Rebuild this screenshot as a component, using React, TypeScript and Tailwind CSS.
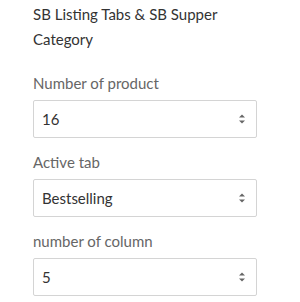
import React from 'react';

const Arrows = () => (
  <svg width="8" height="12" viewBox="0 0 8 12" className="shrink-0">
    <path d="M1 4.5 L4 1.5 L7 4.5 Z" fill="#666" />
    <path d="M1 7.5 L4 10.5 L7 7.5 Z" fill="#666" />
  </svg>
);

const fields = [
  { label: 'Number of product', value: '16' },
  { label: 'Active tab', value: 'Bestselling' },
  { label: 'number of column', value: '5' },
];

export default function App() {
  return (
    <div
      className="w-[300px] h-[302px] bg-white pl-[33px] pt-[2px]"
      style={{ fontFamily: 'Lato, "Open Sans", sans-serif' }}
    >
      <div className="w-[224px]">
        <h3 className="text-[15px] leading-[25px] text-[#333] font-normal">
          SB Listing Tabs &amp; SB Supper Category
        </h3>
        <div className="mt-[19px] flex flex-col gap-[12px]">
          {fields.map((f) => (
            <div key={f.label}>
              <label className="block text-[15px] leading-[24px] text-[#666]">{f.label}</label>
              <div className="mt-[5px] h-[38px] border border-[#d4d4d4] rounded-[2px] flex items-center justify-between pl-[8px] pr-[10px]">
                <span className="text-[15px] text-[#333]">{f.value}</span>
                <Arrows />
              </div>
            </div>
          ))}
        </div>
      </div>
    </div>
  );
}
